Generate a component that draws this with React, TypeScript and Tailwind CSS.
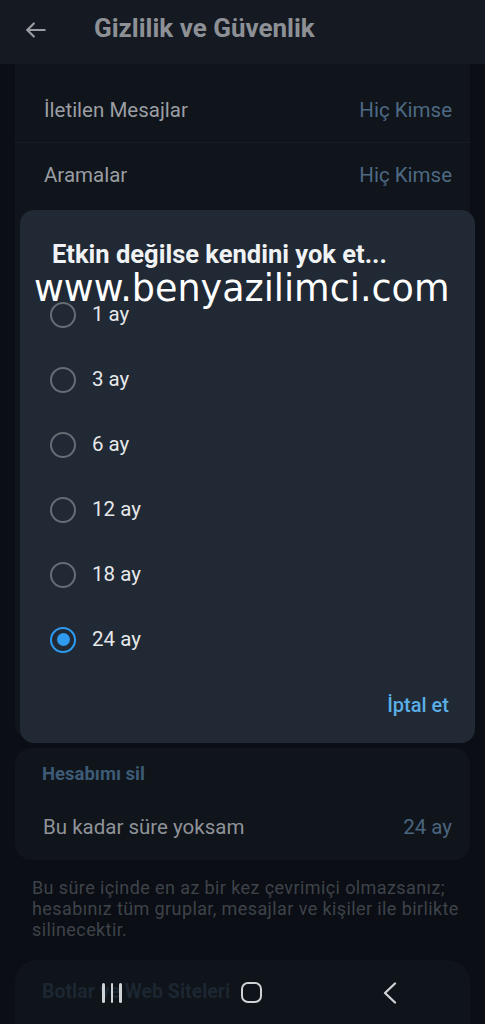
import React from "react";

const font = { fontFamily: "Roboto, 'Noto Sans', sans-serif" } as const;

function Radio({ checked }: { checked?: boolean }) {
  if (checked) {
    return (
      <div className="w-[26px] h-[26px] rounded-full border-[2.5px] border-[#2e9bf0] flex items-center justify-center shrink-0">
        <div className="w-[13px] h-[13px] rounded-full bg-[#2e9bf0]" />
      </div>
    );
  }
  return <div className="w-[26px] h-[26px] rounded-full border-2 border-[#676d74] shrink-0" />;
}

export default function App() {
  const options = ["1 ay", "3 ay", "6 ay", "12 ay", "18 ay", "24 ay"];
  return (
    <div className="relative w-[485px] h-[1024px] overflow-hidden bg-[#0b0e14]" style={font}>
      {/* Header */}
      <div className="h-[64px] bg-[#151a22] flex items-center pb-[8px]">
        <svg width="26" height="26" viewBox="0 0 24 24" className="ml-[23px] mt-[4px]" fill="none" stroke="#9a9ea3" strokeWidth="2" strokeLinecap="round" strokeLinejoin="round">
          <path d="M20 12H4" />
          <path d="M10 6l-6 6 6 6" />
        </svg>
        <div className="ml-[45px] text-[26px] font-bold text-[#8d9196]">Gizlilik ve Güvenlik</div>
      </div>

      {/* Card 1 */}
      <div className="mx-[15px] bg-[#10141b] h-[676px] pt-[14px] rounded-b-[16px]">
        <div className="h-[65px] flex items-center justify-between pl-[29px] pr-[18px] border-b border-[#171c24]">
          <span className="text-[20.5px] text-[#9a9ea3]">İletilen Mesajlar</span>
          <span className="text-[20.5px] text-[#4d6983]">Hiç Kimse</span>
        </div>
        <div className="h-[65px] flex items-center justify-between pl-[29px] pr-[18px]">
          <span className="text-[20.5px] text-[#9a9ea3]">Aramalar</span>
          <span className="text-[20.5px] text-[#4d6983]">Hiç Kimse</span>
        </div>
      </div>

      {/* Card 2 */}
      <div className="mx-[15px] mt-[8px] bg-[#10141b] rounded-[16px] h-[112px] flex flex-col">
        <div className="pl-[27px] pt-[13px] text-[18.5px] font-bold text-[#3d5b76]">Hesabımı sil</div>
        <div className="flex-1 flex items-center justify-between pl-[28px] pr-[18px] pt-[6px]">
          <span className="text-[20.5px] text-[#8f9398]">Bu kadar süre yoksam</span>
          <span className="text-[20.5px] text-[#4a657f]">24 ay</span>
        </div>
      </div>

      {/* Description */}
      <div className="px-[32px] pt-[17px] text-[18px] tracking-[0.4px] leading-[21px] text-[#3e434a] whitespace-nowrap">
        Bu süre içinde en az bir kez çevrimiçi olmazsanız;
        <br />
        hesabınız tüm gruplar, mesajlar ve kişiler ile birlikte
        <br />
        silinecektir.
      </div>

      {/* Bottom card */}
      <div className="mx-[15px] mt-[20px] bg-[#0f131a] rounded-t-[22px] h-[80px] pl-[27px] pt-[17px]">
        <span className="text-[19.5px] font-bold text-[#1b2631]">Botlar ve Web Siteleri</span>
      </div>

      {/* Navigation bar icons */}
      <div className="absolute left-0 right-0 top-[982px] h-[24px]">
        <div className="absolute left-[102px] top-[1px] flex gap-[6px]">
          <div className="w-[2.5px] h-[20px] bg-[#d0d3d6] rounded" />
          <div className="w-[2.5px] h-[20px] bg-[#d0d3d6] rounded" />
          <div className="w-[2.5px] h-[20px] bg-[#d0d3d6] rounded" />
        </div>
        <div className="absolute left-[241px] top-0 w-[21px] h-[21px] border-[2.5px] border-[#d0d3d6] rounded-[7px]" />
        <svg className="absolute left-[381px] top-0" width="18" height="22" viewBox="0 0 18 22" fill="none" stroke="#d0d3d6" strokeWidth="2.3" strokeLinecap="round" strokeLinejoin="round">
          <path d="M14 1.5L4 11l10 9.5" />
        </svg>
      </div>

      {/* Dialog */}
      <div className="absolute left-[20px] top-[210px] w-[455px] h-[533px] rounded-[14px] bg-[#202934] flex flex-col">
        <div className="pl-[32px] pt-[28px] text-[25.5px] leading-[32px] font-bold text-[#f0f2f4]">
          Etkin değilse kendini yok et...
        </div>
        <div className="mt-[12px] flex flex-col">
          {options.map((o, i) => (
            <div key={o} className="h-[65px] flex items-center pl-[30px] gap-[16px]">
              <Radio checked={i === options.length - 1} />
              <span className="text-[20.5px] text-[#e6e8ea]">{o}</span>
            </div>
          ))}
        </div>
        <div className="flex-1 flex items-end justify-end pr-[26px] pb-[23px]">
          <span className="text-[20px] font-medium text-[#5aaee6]">İptal et</span>
        </div>
      </div>

      {/* Watermark */}
      <div
        className="absolute left-[34px] top-[270px] text-[36.5px] leading-[38px] text-white whitespace-nowrap"
        style={{ fontFamily: "'DejaVu Sans', sans-serif" }}
      >
        www.benyazilimci.com
      </div>
    </div>
  );
}
